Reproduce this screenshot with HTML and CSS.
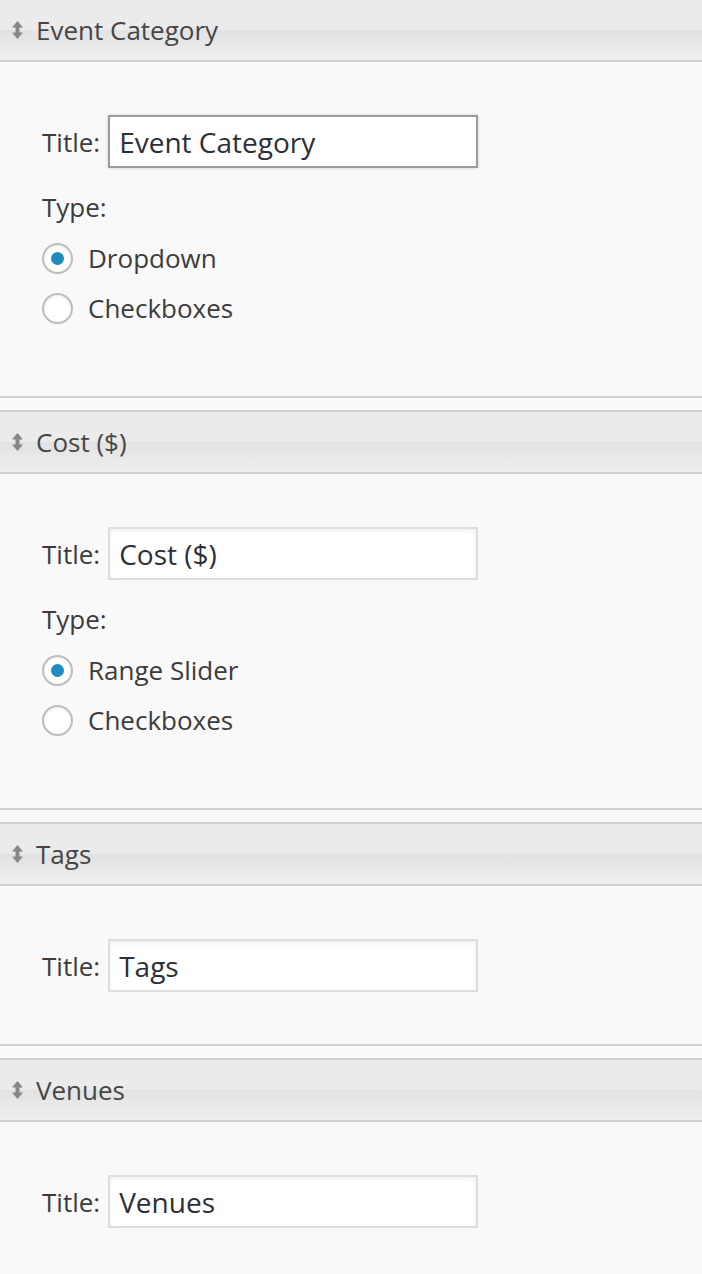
FILE: index.html
```html
<!DOCTYPE html>
<html lang="en">
<head>
<meta charset="utf-8">
<title>Filter widgets</title>
<link rel="stylesheet" href="styles.css">
</head>
<body>
<div class="widgets">
  <section class="widget">
    <div class="widget-top">
      <svg class="sort-icon" viewBox="0 0 11 18" width="11" height="18" aria-hidden="true"><path d="M5.5 0 L11 6.5 H7.5 V11.5 H11 L5.5 18 L0 11.5 H3.5 V6.5 H0 Z"/></svg>
      <h3 class="widget-title">Event Category</h3>
    </div>
    <div class="widget-inside">
      <div class="title-row">
        <span class="field-label">Title:</span>
        <span class="text-input focused">Event Category</span>
      </div>
      <div class="type-label">Type:</div>
      <div class="radio-group">
        <div class="radio-row"><span class="radio checked"></span><span class="radio-text">Dropdown</span></div>
        <div class="radio-row"><span class="radio"></span><span class="radio-text">Checkboxes</span></div>
      </div>
    </div>
  </section>

  <section class="widget">
    <div class="widget-top">
      <svg class="sort-icon" viewBox="0 0 11 18" width="11" height="18" aria-hidden="true"><path d="M5.5 0 L11 6.5 H7.5 V11.5 H11 L5.5 18 L0 11.5 H3.5 V6.5 H0 Z"/></svg>
      <h3 class="widget-title">Cost ($)</h3>
    </div>
    <div class="widget-inside">
      <div class="title-row">
        <span class="field-label">Title:</span>
        <span class="text-input">Cost ($)</span>
      </div>
      <div class="type-label">Type:</div>
      <div class="radio-group">
        <div class="radio-row"><span class="radio checked"></span><span class="radio-text">Range Slider</span></div>
        <div class="radio-row"><span class="radio"></span><span class="radio-text">Checkboxes</span></div>
      </div>
    </div>
  </section>

  <section class="widget">
    <div class="widget-top">
      <svg class="sort-icon" viewBox="0 0 11 18" width="11" height="18" aria-hidden="true"><path d="M5.5 0 L11 6.5 H7.5 V11.5 H11 L5.5 18 L0 11.5 H3.5 V6.5 H0 Z"/></svg>
      <h3 class="widget-title">Tags</h3>
    </div>
    <div class="widget-inside">
      <div class="title-row">
        <span class="field-label">Title:</span>
        <span class="text-input">Tags</span>
      </div>
    </div>
  </section>

  <section class="widget">
    <div class="widget-top">
      <svg class="sort-icon" viewBox="0 0 11 18" width="11" height="18" aria-hidden="true"><path d="M5.5 0 L11 6.5 H7.5 V11.5 H11 L5.5 18 L0 11.5 H3.5 V6.5 H0 Z"/></svg>
      <h3 class="widget-title">Venues</h3>
    </div>
    <div class="widget-inside">
      <div class="title-row">
        <span class="field-label">Title:</span>
        <span class="text-input">Venues</span>
      </div>
    </div>
  </section>
</div>
</body>
</html>
```

FILE: styles.css
```css
html, body {
  margin: 0;
  padding: 0;
  background: #f9f9f9;
}

body {
  font-family: "Open Sans", "Noto Sans", "Liberation Sans", sans-serif;
  font-size: 26px;
  line-height: 36px;
  color: #3c3c3c;
  overflow: hidden;
}

.widgets {
  display: flex;
  flex-direction: column;
  gap: 12px;
}

.widget {
  border-bottom: 2px solid #d0d0d0;
}

.widget:first-child .widget-top {
  border-top: none;
}

.widget-top {
  display: flex;
  align-items: center;
  height: 60px;
  border-top: 2px solid #d0d0d0;
  border-bottom: 2px solid #d0d0d0;
  background: linear-gradient(to bottom, #ebebeb 0%, #ebebeb 50%, #e2e2e2 50%, #efefef 100%);
  padding-left: 12px;
}

.sort-icon {
  display: block;
  width: 11px;
  height: 18px;
  fill: #878787;
  flex: none;
  margin-right: 13px;
  margin-bottom: 1px;
}

.widget-title {
  margin: 0;
  font-size: 26px;
  font-weight: normal;
  color: #464646;
  line-height: 36px;
}

.widget-inside {
  padding: 53px 42px 52px 42px;
}

.title-row {
  display: flex;
  align-items: center;
  gap: 8px;
}

.field-label {
  color: #3c3c3c;
}

.text-input {
  box-sizing: border-box;
  width: 370px;
  height: 53px;
  display: flex;
  align-items: center;
  padding-left: 9px;
  background: #fff;
  border: 2px solid #dddddd;
  box-shadow: inset 0 2px 4px rgba(0, 0, 0, 0.07);
  font-size: 28px;
  color: #2c3035;
}

.text-input.focused {
  border-color: #9c9c9c;
  box-shadow: 0 0 3px rgba(0, 0, 0, 0.18);
}

.type-label {
  margin-top: 21px;
  color: #3c3c3c;
}

.radio-group {
  margin-top: 8px;
  margin-bottom: 11px;
  display: flex;
  flex-direction: column;
}

.radio-row {
  display: flex;
  align-items: center;
  height: 50px;
}

.radio {
  box-sizing: border-box;
  width: 31px;
  height: 31px;
  border-radius: 50%;
  border: 2px solid #bdbdbd;
  background: #fff;
  box-shadow: inset 0 1px 3px rgba(0, 0, 0, 0.08);
  display: flex;
  align-items: center;
  justify-content: center;
  margin-right: 15px;
  flex: none;
}

.radio.checked::after {
  content: "";
  width: 13px;
  height: 13px;
  border-radius: 50%;
  background: #1e8cbe;
}

.radio-text {
  color: #3c3c3c;
}
```
